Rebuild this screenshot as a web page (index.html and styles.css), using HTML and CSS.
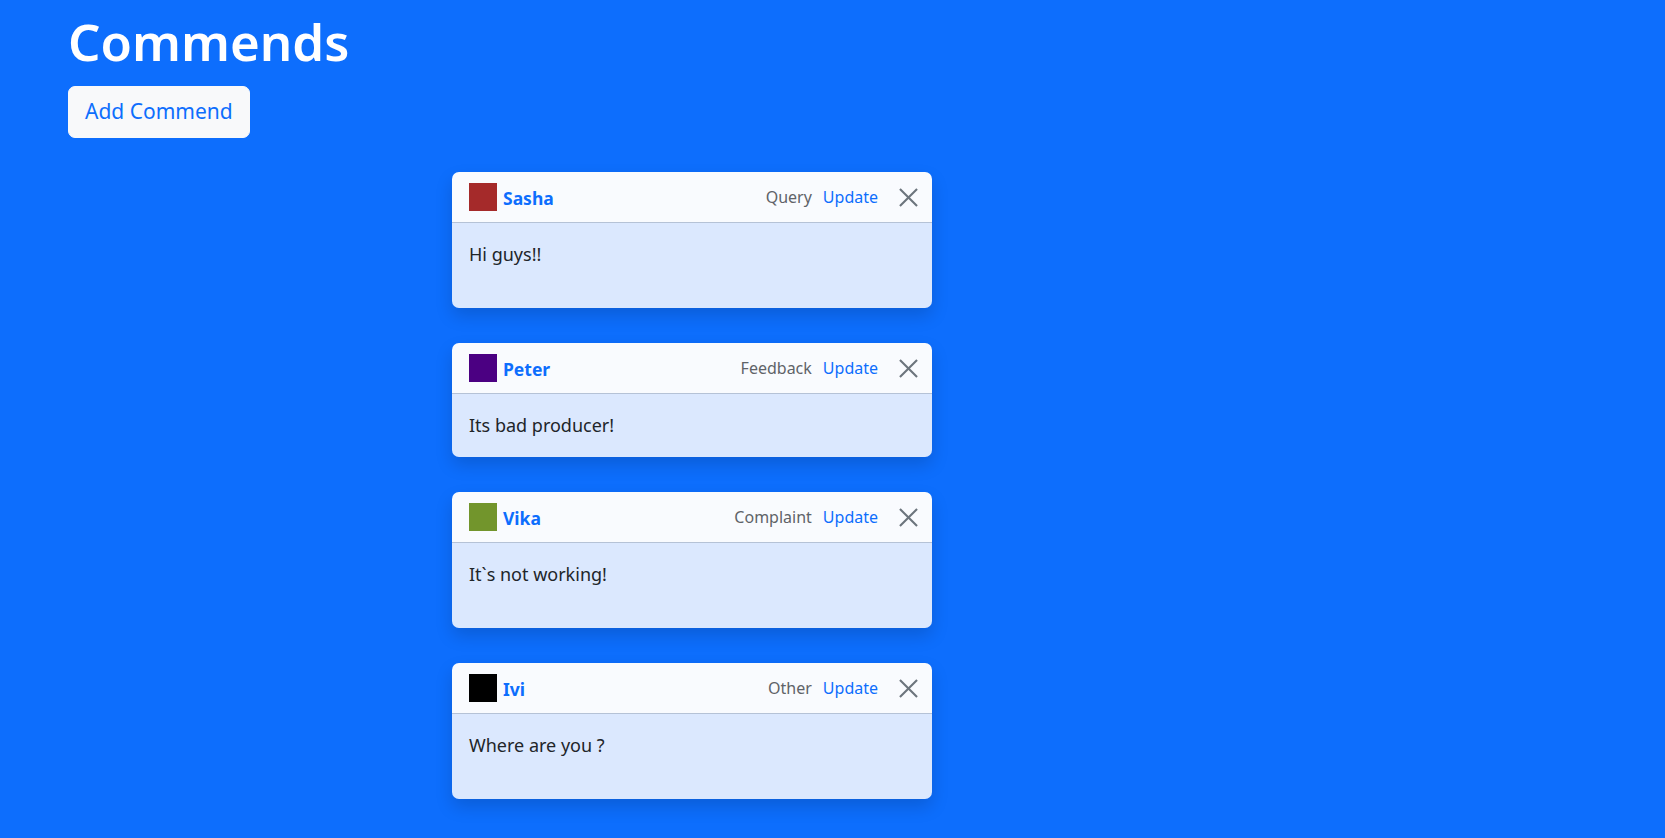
FILE: index.html
```html
<!DOCTYPE html>
<html lang="en">
<head>
<meta charset="utf-8">
<title>Commends</title>
<link rel="stylesheet" href="styles.css">
</head>
<body>
<div class="page">
  <h1 class="title">Commends</h1>
  <button class="btn-add" type="button">Add Commend</button>

  <div class="list">
    <div class="card">
      <div class="card-header">
        <span class="avatar avatar--red"></span>
        <span class="name">Sasha</span>
        <span class="spacer"></span>
        <span class="category">Query</span>
        <a class="update" href="#">Update</a>
        <button class="close" type="button" aria-label="Close"><svg viewBox="0 0 20 20" width="20" height="20"><path d="M1 1L19 19M19 1L1 19" stroke="#6c757d" stroke-width="2.2" fill="none"/></svg></button>
      </div>
      <div class="card-body card-body--tall">Hi guys!!</div>
    </div>

    <div class="card">
      <div class="card-header">
        <span class="avatar avatar--purple"></span>
        <span class="name">Peter</span>
        <span class="spacer"></span>
        <span class="category">Feedback</span>
        <a class="update" href="#">Update</a>
        <button class="close" type="button" aria-label="Close"><svg viewBox="0 0 20 20" width="20" height="20"><path d="M1 1L19 19M19 1L1 19" stroke="#6c757d" stroke-width="2.2" fill="none"/></svg></button>
      </div>
      <div class="card-body">Its bad producer!</div>
    </div>

    <div class="card">
      <div class="card-header">
        <span class="avatar avatar--green"></span>
        <span class="name">Vika</span>
        <span class="spacer"></span>
        <span class="category">Complaint</span>
        <a class="update" href="#">Update</a>
        <button class="close" type="button" aria-label="Close"><svg viewBox="0 0 20 20" width="20" height="20"><path d="M1 1L19 19M19 1L1 19" stroke="#6c757d" stroke-width="2.2" fill="none"/></svg></button>
      </div>
      <div class="card-body card-body--tall">It`s not working!</div>
    </div>

    <div class="card">
      <div class="card-header">
        <span class="avatar avatar--black"></span>
        <span class="name">Ivi</span>
        <span class="spacer"></span>
        <span class="category">Other</span>
        <a class="update" href="#">Update</a>
        <button class="close" type="button" aria-label="Close"><svg viewBox="0 0 20 20" width="20" height="20"><path d="M1 1L19 19M19 1L1 19" stroke="#6c757d" stroke-width="2.2" fill="none"/></svg></button>
      </div>
      <div class="card-body card-body--tall">Where are you ?</div>
    </div>
  </div>
</div>
</body>
</html>
```

FILE: styles.css
```css
html, body {
  margin: 0;
  padding: 0;
}

body {
  background: #0d6efd;
  font-family: "Noto Sans", "Open Sans", sans-serif;
  color: #212529;
  font-size: 17px;
  line-height: 1.5;
  min-height: 838px;
}

.page {
  padding: 11px 0 40px 68px;
}

.title {
  margin: 0 0 14px 0;
  font-size: 51px;
  line-height: 1.2;
  font-weight: 600;
  color: #ffffff;
}

.btn-add {
  display: block;
  font-family: inherit;
  font-size: 21px;
  line-height: 1.5;
  color: #0d6efd;
  background: #f8f9fa;
  border: 1px solid #f8f9fa;
  border-radius: 7px;
  padding: 9px 16px;
  height: 52px;
  cursor: pointer;
}

.list {
  display: flex;
  flex-direction: column;
  gap: 35px;
  margin: 34px 0 0 384px;
  width: 480px;
}

.card {
  border-radius: 7px;
  overflow: hidden;
  box-shadow: 0 8px 17px rgba(0, 0, 0, 0.15);
}

.card-header {
  display: flex;
  align-items: center;
  height: 50px;
  padding: 0 14px 0 17px;
  background: #f9fbfe;
  border-bottom: 1px solid #b5c2d6;
}

.avatar {
  width: 28px;
  height: 28px;
  margin-right: 6px;
  flex: none;
}

.avatar--red { background: #a52a2a; }
.avatar--purple { background: #4b0082; }
.avatar--green { background: #72952c; }
.avatar--black { background: #000000; }

.name {
  font-size: 17.5px;
  font-weight: 700;
  color: #0d6efd;
  margin-top: 2px;
}

.spacer {
  flex: 1;
}

.category {
  font-size: 16px;
  color: #5f6368;
  margin-right: 11px;
}

.update {
  font-size: 16px;
  color: #0d6efd;
  text-decoration: none;
  margin-right: 21px;
}

.close {
  display: flex;
  align-items: center;
  justify-content: center;
  width: 19px;
  height: 19px;
  padding: 0;
  border: 0;
  background: transparent;
  cursor: pointer;
}

.close svg {
  width: 19px;
  height: 19px;
}

.card-body {
  background: #dbe8fe;
  padding: 18px 17px;
  font-size: 18px;
  line-height: 27px;
}

.card-body--tall {
  min-height: 49px;
}
```
